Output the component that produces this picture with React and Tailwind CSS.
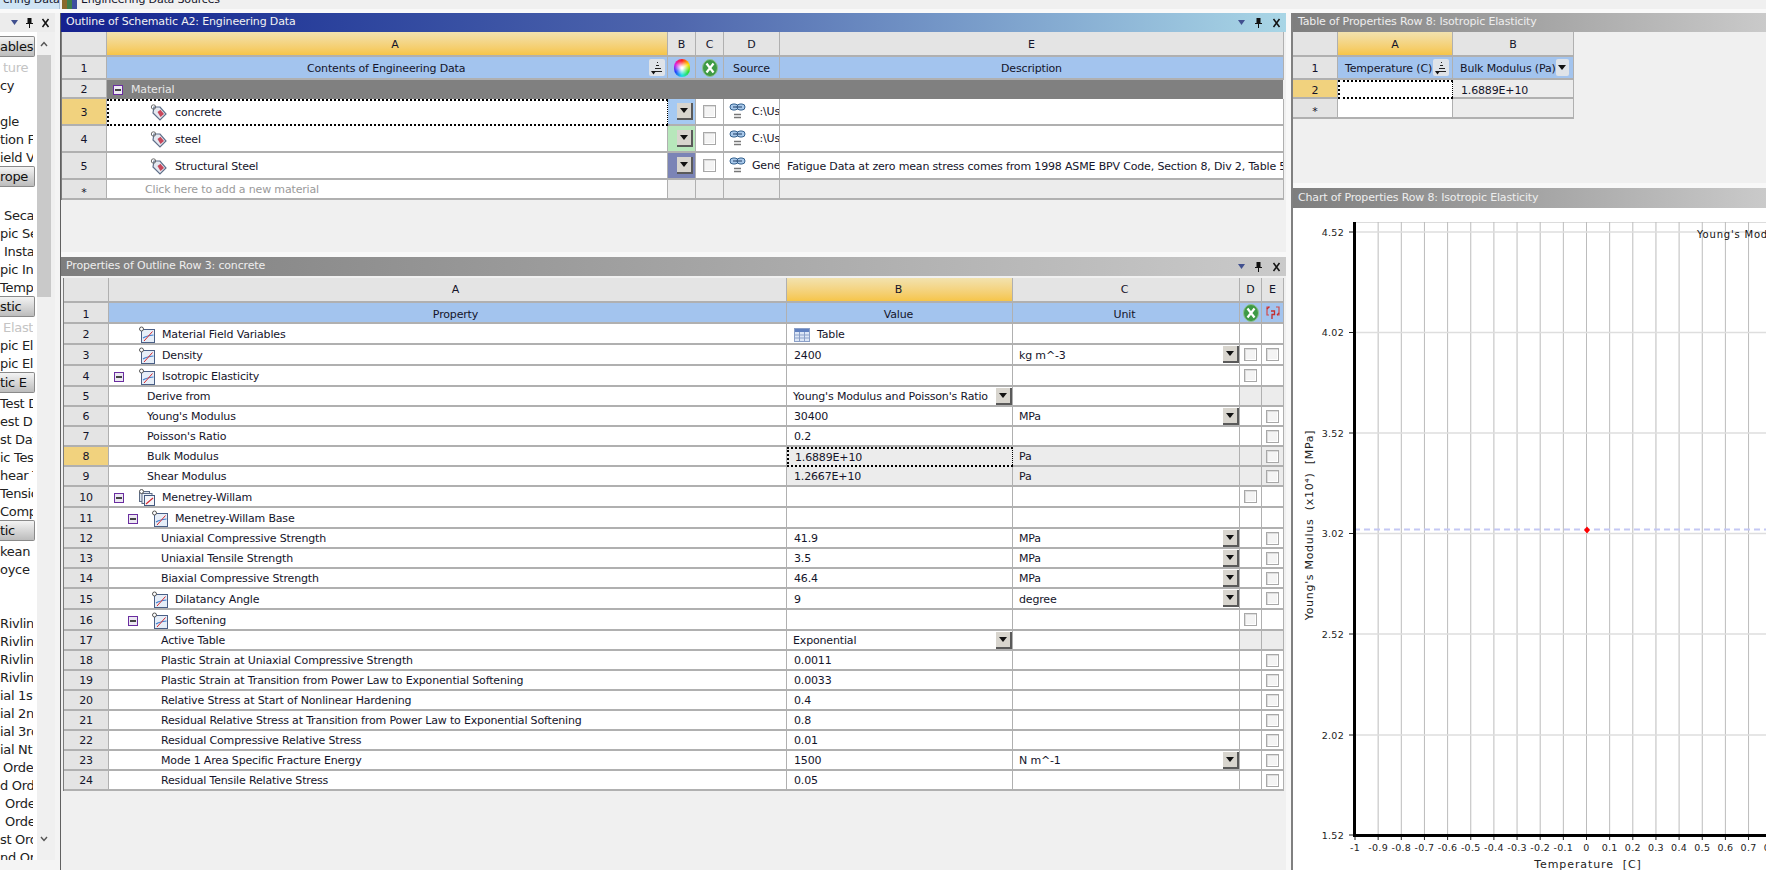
import React from "react";

const Tag = () => (
  <svg width="17" height="17" viewBox="0 0 17 17" className="shrink-0">
    <path d="M4 3 L10 3 L16 10 L10 16 L3 9 Z" fill="#e4e8f0" stroke="#5f6f8a" strokeWidth="1.2" />
    <path d="M7.5 8 L10.5 5.8 L14 10 L10.5 13 Z" fill="#c8465a" />
    <circle cx="3.5" cy="3" r="2.2" fill="none" stroke="#6b6b6b" strokeWidth="1" />
  </svg>
);

const Graph = () => (
  <svg width="16" height="17" viewBox="0 0 16 17" className="shrink-0">
    <rect x="2.5" y="3.5" width="13" height="13" fill="#e6eef8" stroke="#4a5f86" />
    <path d="M4 12 C7 10 10 9.5 14.5 9" fill="none" stroke="#3f7fd0" strokeWidth="1.2" />
    <path d="M5 15 L13.5 5.5" fill="none" stroke="#d6262c" strokeWidth="1" />
    <circle cx="2.5" cy="3" r="2" fill="#fff" stroke="#555" strokeWidth="1" />
  </svg>
);

const GraphStack = () => (
  <svg width="16" height="17" viewBox="0 0 16 17" className="shrink-0">
    <rect x="0.5" y="2.5" width="10" height="10" fill="#dfe6f0" stroke="#5c6b85" />
    <rect x="3" y="4.5" width="10" height="10" fill="#eef2f8" stroke="#5c6b85" />
    <rect x="5.5" y="6.5" width="10" height="10" fill="#f4f6fb" stroke="#44597e" />
    <path d="M7 15 L14 9" fill="none" stroke="#d6262c" strokeWidth="1.1" />
    <circle cx="2.5" cy="2.5" r="2" fill="#fff" stroke="#555" strokeWidth="1" />
  </svg>
);

const Minus = ({ className }) => (
  <span className={`flex h-[10px] w-[10px] shrink-0 items-center justify-center border border-[#6a2da0] bg-[#ece8f2] ${className}`}>
    <span className="h-[2px] w-[6px] bg-[#444]" />
  </span>
);

const Caret = () => (
  <svg width="8" height="5" viewBox="0 0 8 5"><path d="M0 0 H8 L4 5 Z" fill="#111" /></svg>
);

const Dd = () => (
  <span className="flex h-[17px] w-[16px] shrink-0 items-center justify-center border-b-2 border-r-2 border-[#5a5a5a] bg-[#d8d5ce]">
    <Caret />
  </span>
);

const Check = () => (
  <span className="block h-[13px] w-[13px] shrink-0 border border-[#a8a8a8] bg-[#f4f4f4] shadow-[inset_1px_1px_0_#dcdcdc,inset_-1px_-1px_0_#fff]" />
);

const Sort = () => (
  <span className="flex h-[17px] w-[16px] shrink-0 items-center justify-center rounded-[2px] bg-[#dfe3e8]">
    <svg width="12" height="14" viewBox="0 0 12 14">
      <path d="M6 1h1v1H6zM5 4h3v1H5zM4 7h6v1H4zM3 10h8v1H3z" fill="#222" />
      <path d="M0 10 H5 L2.5 13.5 Z" fill="#111" />
    </svg>
  </span>
);

const ColorWheel = () => (
  <span className="block h-[18px] w-[16px] rounded-full [background:radial-gradient(circle,#fff_8%,transparent_60%),conic-gradient(#ff2020,#ffe000,#30e030,#20e0e0,#2040ff,#e020e0,#ff2020)]" />
);

const GreenX = () => (
  <svg width="16" height="18" viewBox="0 0 16 18">
    <ellipse cx="8" cy="9" rx="7.5" ry="8.5" fill="#3e9a45" stroke="#8fc08f" />
    <path d="M4.5 4.5 L11.5 13.5 M11.5 4.5 L4.5 13.5" stroke="#fff" strokeWidth="2.2" />
  </svg>
);

const ParamIcon = () => (
  <svg width="16" height="16" viewBox="0 0 16 16">
    <path d="M5 2 H2 V10 H4 M11 2 H14 V10 H12" fill="none" stroke="#d24a4a" strokeWidth="1.2" />
    <path d="M6 6 H9.5 V9.5 H7 V14 M2 4 L4 2 M14 8 L12 10" fill="none" stroke="#c42f2f" strokeWidth="1.3" />
  </svg>
);

const LinkIcon = () => (
  <svg width="17" height="18" viewBox="0 0 17 18" className="shrink-0">
    <rect x="1" y="1" width="8" height="6" rx="3" fill="#a8c8ea" stroke="#33608e" />
    <rect x="8" y="1" width="8" height="6" rx="3" fill="#a8c8ea" stroke="#33608e" />
    <path d="M4 4 H13" stroke="#1f3f66" />
    <path d="M5 11.5 H12 M5 14.5 H12" stroke="#777" strokeWidth="1.6" />
  </svg>
);

const TableIcon = () => (
  <svg width="16" height="14" viewBox="0 0 16 14" className="shrink-0">
    <rect x="0.5" y="0.5" width="15" height="13" fill="#dce6f6" stroke="#8ba0c8" />
    <rect x="1" y="1" width="14" height="3" fill="#5f80c0" />
    <path d="M5.5 4 V13 M10.5 4 V13 M1 7 H15 M1 10 H15" stroke="#8ba0c8" />
  </svg>
);

const PanelIcons = () => (
  <div className="flex shrink-0 items-center gap-[9px] pr-[5px] text-[#111]">
    <svg width="7" height="5" viewBox="0 0 7 5"><path d="M0 0 H7 L3.5 5 Z" fill="#41508f" /></svg>
    <svg width="9" height="11" viewBox="0 0 9 11">
      <path d="M2.5 1 H6.5 V6 H8 V7 H1 V6 H2.5 Z M4 7 H5 V11 H4 Z" fill="#111" />
    </svg>
    <svg width="9" height="10" viewBox="0 0 9 10">
      <path d="M1.5 1 L7.5 9 M7.5 1 L1.5 9" stroke="#111" strokeWidth="1.5" />
    </svg>
  </div>
);

const Title = ({ children }) => <span className="-mt-[2px] whitespace-nowrap">{children}</span>;

const sideRows = [
  ["b", "ables", 0], ["g", "ture", 3], ["t", "cy", 0], ["t", "", 0], ["t", "gle", 0], ["t", "tion Fa", 0], ["t", "ield Va", 0],
  ["b", "rope", 0], ["t", "", 0], ["t", "Secar", 4], ["t", "pic Se", 0], ["t", "Insta", 4], ["t", "pic Ins", 0], ["t", "Tempe", 0],
  ["b", "stic", 0], ["g", "Elasti", 3], ["t", "pic Ela", 0], ["t", "pic Ela", 0],
  ["b", "tic E", 0], ["t", "Test D", 0], ["t", "est Da", 0], ["t", "st Dat", 0], ["t", "ic Tes", 0], ["t", "hear T", 0], ["t", "Tensic", 0], ["t", "Compr", 0],
  ["b", "tic", 0], ["t", "kean", 0], ["t", "oyce", 0], ["t", "", 0], ["t", "", 0],
  ["t", "Rivlin", 0], ["t", "Rivlin", 0], ["t", "Rivlin", 0], ["t", "Rivlin", 0],
  ["t", "ial 1st", 0], ["t", "ial 2nc", 0], ["t", "ial 3rd", 0], ["t", "ial Nth", 0],
  ["t", "Order", 3], ["t", "d Orde", 0], ["t", "Orde", 5], ["t", "Orde", 5], ["t", "st Ord", 0], ["t", "nd Orc", 0],
];

const LeftPanel = () => (
  <aside className="flex h-full w-[61px] shrink-0 flex-col border-r border-[#606060] bg-[#f4f4f4]">
    <div className="flex h-[19px] w-[55px] shrink-0 items-center justify-end bg-[#ececec]">
      <div className="flex items-center gap-[7px] pr-[5px]">
        <svg width="7" height="5" viewBox="0 0 7 5"><path d="M0 0 H7 L3.5 5 Z" fill="#41508f" /></svg>
        <svg width="9" height="11" viewBox="0 0 9 11"><path d="M2.5 1 H6.5 V6 H8 V7 H1 V6 H2.5 Z M4 7 H5 V11 H4 Z" fill="#111" /></svg>
        <svg width="9" height="10" viewBox="0 0 9 10"><path d="M1.5 1 L7.5 9 M7.5 1 L1.5 9" stroke="#111" strokeWidth="1.5" /></svg>
      </div>
    </div>
    <div className="flex h-[828px] w-[55px] shrink-0 bg-[#f0f0f0]">
      <div className="h-full w-[37px] shrink-0 overflow-hidden bg-white pt-[4px] text-[13px] tracking-[-0.3px] text-[#222]">
        {sideRows.map(([k, t, p], i) =>
          k === "b" ? (
            <div key={i} className="mb-px flex h-[21px] w-[35px] items-center overflow-hidden whitespace-nowrap rounded-r-[2px] border border-l-0 border-[#8a8a8a] bg-gradient-to-b from-[#f4f4f4] to-[#bcbcbc] text-[#111]">
              {t}
            </div>
          ) : (
            <div key={i} className={`flex h-[18px] w-[33px] items-center overflow-hidden whitespace-nowrap ${k === "g" ? "text-[#c4c4c4]" : ""}`}>
              <span style={{ paddingLeft: p }}>{t}</span>
            </div>
          )
        )}
      </div>
      <div className="flex h-full w-[14px] flex-col items-center bg-[#f0f0f0]">
        <div className="flex h-[23px] shrink-0 items-center">
          <svg width="8" height="6" viewBox="0 0 8 6"><path d="M1 5 L4 1.5 L7 5" fill="none" stroke="#555" strokeWidth="1.4" /></svg>
        </div>
        <div className="h-[242px] w-full shrink-0 bg-[#c9c9c9]" />
        <div className="flex-1" />
        <div className="flex h-[24px] shrink-0 items-start">
          <svg width="8" height="6" viewBox="0 0 8 6"><path d="M1 1 L4 4.5 L7 1" fill="none" stroke="#555" strokeWidth="1.4" /></svg>
        </div>
      </div>
    </div>
  </aside>
);

const rowB = "border-b-2 border-[#b0b0b0]";
const colB = "border-r border-[#7c7c7c]";
const hdrSel = "bg-gradient-to-b from-[#f2e2ae] to-[#f6c548]";

const RowHead = ({ w, sel, star, className = "", children }) => (
  <div className={`flex shrink-0 items-center justify-center ${colB} ${rowB} ${w} ${sel ? "bg-[#f1d27e]" : "bg-[#e4e4e4]"} ${star ? "pt-[6px]" : ""} ${className}`}>
    {children}
  </div>
);

const Cell = ({ w, className = "", children }) => (
  <div className={`flex shrink-0 items-center overflow-hidden whitespace-nowrap ${w} ${colB} ${rowB} ${className}`}>
    {children}
  </div>
);

const OW = { h: "w-[45px]", a: "w-[561px]", b: "w-[28px]", c: "w-[28px]", d: "w-[56px]", e: "w-[504px]" };

const OutlineRow = ({ n, name, src, desc, color, sel }) => (
  <div className="flex h-[27px]">
    <RowHead w={OW.h} sel={sel} className="pt-[2px]">{n}</RowHead>
    <Cell w={OW.a} className={`bg-white ${sel ? "border-2 border-dotted border-black pl-[41px]" : "pl-[43px] pt-[2px]"}`}>
      <Tag />
      <span className="ml-[8px]">{name}</span>
    </Cell>
    <Cell w={OW.b} className={`justify-end pr-[2px] ${color}`}><Dd /></Cell>
    <Cell w={OW.c} className="justify-center bg-white"><Check /></Cell>
    <Cell w={OW.d} className="bg-white pl-[5px]">
      <LinkIcon />
      <span className="ml-[6px]">{src}</span>
    </Cell>
    <Cell w={OW.e} className="bg-white pl-[7px] pt-[2px]">{desc}</Cell>
  </div>
);

const OutlinePanel = () => (
  <section className="flex h-[239px] shrink-0 flex-col bg-[#f0f0f0]">
    <div className="flex h-[19px] shrink-0 items-center justify-between bg-gradient-to-r from-[#15208f] via-[#4f66ad] to-[#a9d6e6] pl-[5px] text-[#f2f2f2]">
      <Title>Outline of Schematic A2: Engineering Data</Title>
      <PanelIcons />
    </div>
    <div className="flex w-[1222px] flex-col border-l border-[#7c7c7c]">
      <div className="flex h-[25px] text-center">
        <RowHead w={OW.h} />
        <Cell w={OW.a} className={`justify-center pl-[16px] pt-[2px] ${hdrSel}`}>A</Cell>
        <Cell w={OW.b} className="justify-center bg-[#e4e4e4] pt-[2px]">B</Cell>
        <Cell w={OW.c} className="justify-center bg-[#e4e4e4] pt-[2px]">C</Cell>
        <Cell w={OW.d} className="justify-center bg-[#e4e4e4] pt-[2px]">D</Cell>
        <Cell w={OW.e} className="justify-center bg-[#e4e4e4] pt-[2px]">E</Cell>
      </div>
      <div className="flex h-[23px]">
        <RowHead w={OW.h} className="pt-[2px]">1</RowHead>
        <Cell w={OW.a} className="justify-between bg-[#a3c4ee] pl-[197px] pr-[2px]">
          <span className="ml-[3px] pt-[1px]">Contents of Engineering Data</span>
          <Sort />
        </Cell>
        <Cell w={OW.b} className="justify-center bg-[#a3c4ee]"><ColorWheel /></Cell>
        <Cell w={OW.c} className="justify-center bg-[#a3c4ee]"><GreenX /></Cell>
        <Cell w={OW.d} className="justify-center bg-[#a3c4ee] pt-[1px]">Source</Cell>
        <Cell w={OW.e} className="justify-center bg-[#a3c4ee] pt-[1px]">Description</Cell>
      </div>
      <div className="flex h-[19px]">
        <RowHead w={OW.h} className="pt-[2px]">2</RowHead>
        <div className="flex w-[1177px] items-center bg-[#808080] pl-[6px] text-[#e6e6e6]">
          <Minus className="mr-[8px] bg-[#d8d4e0]" />
          <span>Material</span>
        </div>
      </div>
      <OutlineRow n="3" name="concrete" src="C:\Users" desc="" color="bg-[#a5c9f2]" sel />
      <OutlineRow n="4" name="steel" src="C:\Users" desc="" color="bg-[#b7e7bb]" />
      <OutlineRow n="5" name="Structural Steel" src="General" desc="Fatigue Data at zero mean stress comes from 1998 ASME BPV Code, Section 8, Div 2, Table 5-110.1" color="bg-[#7b84b6]" />
      <div className="flex h-[20px]">
        <RowHead w={OW.h} star>*</RowHead>
        <Cell w={OW.a} className="bg-white pl-[38px] text-[#9a9a9a]">Click here to add a new material</Cell>
        <Cell w={OW.b} className="bg-[#ececec]" />
        <Cell w={OW.c} className="bg-[#ececec]" />
        <Cell w={OW.d} className="bg-[#ececec]" />
        <Cell w={OW.e} className="bg-[#ececec]" />
      </div>
    </div>
  </section>
);

const PW = { h: "w-[45px]", a: "w-[678px]", b: "w-[226px]", c: "w-[227px]", d: "w-[22px]", e: "w-[22px]" };

const pRows = [
  { n: 2, t: "Material Field Variables", k: "g0", tall: 1, tableVal: 1 },
  { n: 3, t: "Density", k: "g0", tall: 1, v: "2400", u: "kg m^-3", ud: 1, d: 1, e: 1 },
  { n: 4, t: "Isotropic Elasticity", k: "g0m", tall: 1, d: 1 },
  { n: 5, t: "Derive from", k: "t1", v: "Young's Modulus and Poisson's Ratio", vd: 1, gr: 1 },
  { n: 6, t: "Young's Modulus", k: "t1", v: "30400", u: "MPa", ud: 1, e: 1 },
  { n: 7, t: "Poisson's Ratio", k: "t1", v: "0.2", e: 1 },
  { n: 8, t: "Bulk Modulus", k: "t1", v: "1.6889E+10", u: "Pa", e: 1, grey: 1, sel: 1 },
  { n: 9, t: "Shear Modulus", k: "t1", v: "1.2667E+10", u: "Pa", e: 1, grey: 1 },
  { n: 10, t: "Menetrey-Willam", k: "s0m", tall: 1, d: 1 },
  { n: 11, t: "Menetrey-Willam Base", k: "g1m", tall: 1 },
  { n: 12, t: "Uniaxial Compressive Strength", k: "t2", v: "41.9", u: "MPa", ud: 1, e: 1 },
  { n: 13, t: "Uniaxial Tensile Strength", k: "t2", v: "3.5", u: "MPa", ud: 1, e: 1 },
  { n: 14, t: "Biaxial Compressive Strength", k: "t2", v: "46.4", u: "MPa", ud: 1, e: 1 },
  { n: 15, t: "Dilatancy Angle", k: "g1", tall: 1, v: "9", u: "degree", ud: 1, e: 1 },
  { n: 16, t: "Softening", k: "g1m", tall: 1, d: 1 },
  { n: 17, t: "Active Table", k: "t2", v: "Exponential", vd: 1, gr: 1 },
  { n: 18, t: "Plastic Strain at Uniaxial Compressive Strength", k: "t2", v: "0.0011", e: 1 },
  { n: 19, t: "Plastic Strain at Transition from Power Law to Exponential Softening", k: "t2", v: "0.0033", e: 1 },
  { n: 20, t: "Relative Stress at Start of Nonlinear Hardening", k: "t2", v: "0.4", e: 1 },
  { n: 21, t: "Residual Relative Stress at Transition from Power Law to Exponential Softening", k: "t2", v: "0.8", e: 1 },
  { n: 22, t: "Residual Compressive Relative Stress", k: "t2", v: "0.01", e: 1 },
  { n: 23, t: "Mode 1 Area Specific Fracture Energy", k: "t2", v: "1500", u: "N m^-1", ud: 1, e: 1 },
  { n: 24, t: "Residual Tensile Relative Stress", k: "t2", v: "0.05", e: 1 },
];

const PropLabel = ({ k, t }) => {
  if (k === "t1") return <span className="pl-[38px]">{t}</span>;
  if (k === "t2") return <span className="pl-[52px]">{t}</span>;
  const m = k.endsWith("m");
  const lvl1 = k.startsWith("g1");
  return (
    <span className="flex items-center">
      {m ? <Minus className={lvl1 ? "ml-[19px] mr-[14px]" : "ml-[5px] mr-[15px]"} /> : <span className={lvl1 ? "w-[43px]" : "w-[30px]"} />}
      {k.startsWith("s") ? <GraphStack /> : <Graph />}
      <span className="ml-[7px]">{t}</span>
    </span>
  );
};

const PropRow = ({ r }) => {
  const bg = r.grey ? "bg-[#ececec]" : "bg-white";
  const n = r.tall ? "pt-[2px]" : "";
  return (
    <div className={`flex ${r.tall ? "h-[21px]" : "h-[20px]"}`}>
      <RowHead w={PW.h} sel={r.n === 8} className={n}>{r.n}</RowHead>
      <Cell w={PW.a} className={`bg-white ${n}`}><PropLabel k={r.k} t={r.t} /></Cell>
      <Cell w={PW.b} className={`${bg} justify-between ${n} ${r.vd ? "pl-[6px]" : r.sel ? "pl-[6px]" : "pl-[7px]"} ${r.sel ? "border-2 border-dotted border-black" : ""}`}>
        {r.tableVal ? (
          <span className="flex items-center gap-[7px]"><TableIcon /><span>Table</span></span>
        ) : (
          <span>{r.v}</span>
        )}
        {r.vd ? <Dd /> : null}
      </Cell>
      <Cell w={PW.c} className={`${bg} justify-between pl-[6px]`}>
        <span className={n}>{r.u}</span>
        {r.ud ? <Dd /> : null}
      </Cell>
      <Cell w={PW.d} className={`justify-center ${r.gr || r.grey ? "bg-[#ececec]" : "bg-white"}`}>{r.d ? <Check /> : null}</Cell>
      <Cell w={PW.e} className={`justify-center ${r.gr || r.grey ? "bg-[#ececec]" : "bg-white"}`}>{r.e ? <Check /> : null}</Cell>
    </div>
  );
};

const PropsPanel = () => (
  <section className="flex min-h-0 flex-1 flex-col bg-[#f0f0f0]">
    <div className="flex h-[19px] shrink-0 items-center justify-between bg-gradient-to-r from-[#7e7e7e] to-[#cacaca] pl-[5px] text-[#eeeeee]">
      <Title>Properties of Outline Row 3: concrete</Title>
      <PanelIcons />
    </div>
    <div className="ml-[2px] mt-[2px] flex w-[1221px] flex-col border-l border-[#7c7c7c]">
      <div className="flex h-[25px]">
        <RowHead w={PW.h} />
        <Cell w={PW.a} className="justify-center bg-[#e4e4e4] pl-[16px]">A</Cell>
        <Cell w={PW.b} className={`justify-center pr-[2px] ${hdrSel}`}>B</Cell>
        <Cell w={PW.c} className="justify-center bg-[#e4e4e4] pr-[3px]">C</Cell>
        <Cell w={PW.d} className="justify-center bg-[#e4e4e4]">D</Cell>
        <Cell w={PW.e} className="justify-center bg-[#e4e4e4]">E</Cell>
      </div>
      <div className="flex h-[21px]">
        <RowHead w={PW.h} className="pt-[4px]">1</RowHead>
        <Cell w={PW.a} className="justify-center bg-[#a3c4ee] pl-[16px] pt-[3px]">Property</Cell>
        <Cell w={PW.b} className="justify-center bg-[#a3c4ee] pr-[2px] pt-[3px]">Value</Cell>
        <Cell w={PW.c} className="justify-center bg-[#a3c4ee] pr-[3px] pt-[3px]">Unit</Cell>
        <Cell w={PW.d} className="justify-center bg-[#a3c4ee]"><GreenX /></Cell>
        <Cell w={PW.e} className="justify-center bg-[#a3c4ee]"><ParamIcon /></Cell>
      </div>
      {pRows.map((r) => <PropRow key={r.n} r={r} />)}
    </div>
  </section>
);

const xTicks = ["-1", "-0.9", "-0.8", "-0.7", "-0.6", "-0.5", "-0.4", "-0.3", "-0.2", "-0.1", "0", "0.1", "0.2", "0.3", "0.4", "0.5", "0.6", "0.7", "0.8"];
const yTicks = [["4.52", 232], ["4.02", 332.5], ["3.52", 433], ["3.02", 533.5], ["2.52", 634], ["2.02", 735], ["1.52", 835]];

const Chart = () => (
  <svg viewBox="1293 208 473 662" width="473" height="662" className="block" fontFamily="DejaVu Sans, sans-serif" fontSize="9.5" fill="#222">
    <rect x="1293" y="208" width="473" height="662" fill="#fff" />
    <line x1="1354" x2="1766" y1="222.5" y2="222.5" stroke="#dcdcdc" />
    {xTicks.map((t, i) => {
      const x = 1355 + i * 23.15;
      return (
        <g key={t}>
          <line x1={x} x2={x} y1="222" y2="835" stroke="#bcbcbc" />
          <line x1={x} x2={x} y1="835" y2="840" stroke="#222" />
          <text x={x} y="851" textAnchor="middle" fontSize="9.5" letterSpacing="0.3">{t}</text>
        </g>
      );
    })}
    {yTicks.map(([t, y]) => (
      <g key={t}>
        <line x1="1354" x2="1766" y1={y} y2={y} stroke="#dedede" strokeWidth="1.6" />
        <line x1="1349" x2="1354" y1={y} y2={y} stroke="#222" />
        <text x="1344" y={y + 3.5} textAnchor="end" letterSpacing="0.3">{t}</text>
      </g>
    ))}
    <line x1="1354" x2="1766" y1="529.5" y2="529.5" stroke="#c4c8f4" strokeWidth="2" strokeDasharray="6 4" />
    <path d="M1587 526.5 L1590 530 L1587 533.5 L1584 530 Z" fill="#ff0000" />
    <rect x="1353" y="222" width="3" height="615" fill="#000" />
    <rect x="1353" y="834" width="413" height="3" fill="#000" />
    <text x="1697" y="238" fontSize="10" letterSpacing="0.8" fill="#111">Young's Modulus</text>
    <text transform="translate(1313 525) rotate(-90)" textAnchor="middle" fontSize="11" letterSpacing="0.7">{"Young's Modulus\u00A0\u00A0(x10⁴)\u00A0\u00A0[MPa]"}</text>
    <text x="1588" y="868" textAnchor="middle" fontSize="11" letterSpacing="0.9">{"Temperature\u00A0\u00A0[C]"}</text>
  </svg>
);

const RW = { h: "w-[45px]", a: "w-[115px]", b: "w-[121px]" };

const RightPanel = () => (
  <div className="flex h-full min-w-0 flex-1 flex-col border-l-2 border-[#808080] bg-[#f0f0f0]">
    <div className="flex h-[19px] shrink-0 items-center bg-gradient-to-r from-[#7e7e7e] to-[#cacaca] pl-[5px] text-[#eeeeee]">
      <Title>Table of Properties Row 8: Isotropic Elasticity</Title>
    </div>
    <div className="flex h-[151px] shrink-0 flex-col">
      <div className="flex h-[25px]">
        <RowHead w={RW.h} />
        <Cell w={RW.a} className={`justify-center pt-[2px] ${hdrSel}`}>A</Cell>
        <Cell w={RW.b} className="justify-center bg-[#e4e4e4] pt-[2px]">B</Cell>
      </div>
      <div className="flex h-[23px]">
        <RowHead w={RW.h} className="pt-[2px]">1</RowHead>
        <Cell w={RW.a} className="justify-between bg-[#a3c4ee] pl-[7px] pr-[3px]"><span className="pt-[1px]">Temperature (C)</span><Sort /></Cell>
        <Cell w={RW.b} className="justify-between bg-[#a3c4ee] pl-[7px] pr-[4px]">
          <span className="pt-[1px]">Bulk Modulus (Pa)</span>
          <span className="flex h-[17px] w-[16px] items-center justify-center rounded-[2px] bg-[#dfe3e8]"><Caret /></span>
        </Cell>
      </div>
      <div className="flex h-[19px]">
        <RowHead w={RW.h} sel className="pt-[3px]">2</RowHead>
        <Cell w={RW.a} className="border-2 border-dotted border-black bg-white" />
        <Cell w={RW.b} className="bg-[#ececec] pl-[8px] pt-[3px]">1.6889E+10</Cell>
      </div>
      <div className="flex h-[20px]">
        <RowHead w={RW.h} star>*</RowHead>
        <Cell w={RW.a} className="bg-white" />
        <Cell w={RW.b} className="bg-[#ececec]" />
      </div>
    </div>
    <div className="h-[5px] shrink-0 bg-[#f8f8f8]" />
    <div className="flex h-[20px] shrink-0 items-center bg-gradient-to-r from-[#7e7e7e] to-[#cacaca] pl-[5px] text-[#eeeeee]">
      <Title>Chart of Properties Row 8: Isotropic Elasticity</Title>
    </div>
    <div className="min-h-0 flex-1 overflow-hidden bg-white">
      <Chart />
    </div>
  </div>
);

export default function App() {
  return (
    <div className="flex h-[870px] w-[1766px] flex-col overflow-hidden bg-[#f0f0f0] text-[11px] leading-none tracking-[-0.16px] text-[#14142a] font-['DejaVu_Sans',sans-serif]">
      <div className="flex h-[9px] shrink-0 items-start overflow-hidden bg-[#f0f0f0]">
        <div className="h-[9px] w-[60px] shrink-0 overflow-hidden border-r border-[#a8c0d8] bg-[#cfe4f4] pl-[3px]">
          <div className="-mt-[6px] whitespace-nowrap">ering Data</div>
        </div>
        <svg width="15" height="9" viewBox="0 0 15 9" className="ml-[2px] shrink-0">
          <rect x="0" y="0" width="5" height="9" fill="#8a6a2a" />
          <rect x="5" y="0" width="5" height="9" fill="#3f7f4a" />
          <rect x="10" y="0" width="5" height="9" fill="#3f4fa0" />
        </svg>
        <div className="-mt-[6px] ml-[4px] whitespace-nowrap">Engineering Data Sources</div>
      </div>
      <div className="h-[4px] shrink-0 bg-[#f9f9f9]" />
      <div className="flex min-h-0 flex-1">
        <LeftPanel />
        <div className="flex h-full w-[1225px] shrink-0 flex-col">
          <OutlinePanel />
          <div className="h-[5px] shrink-0 bg-[#f8f8f8]" />
          <PropsPanel />
        </div>
        <div className="h-full w-[5px] shrink-0 bg-[#f8f8f8]" />
        <RightPanel />
      </div>
    </div>
  );
}
